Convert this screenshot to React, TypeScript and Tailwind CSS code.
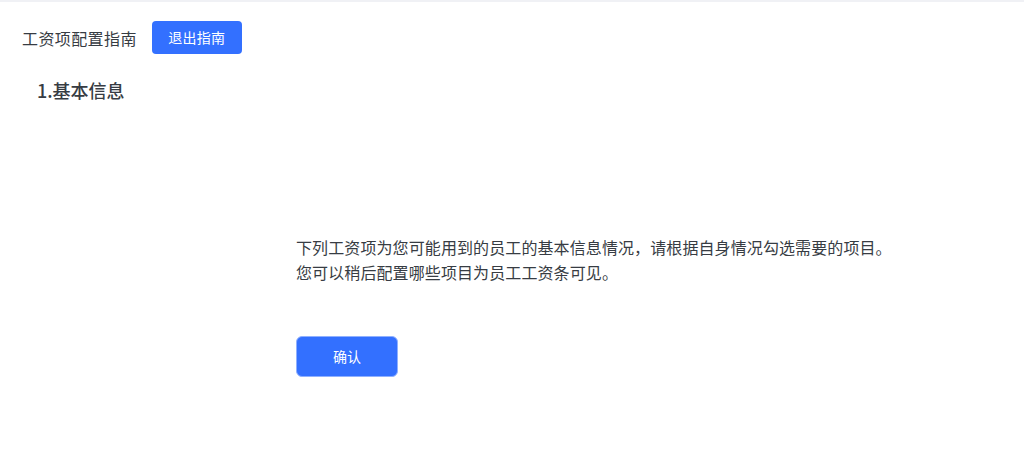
const font = { fontFamily: '"Noto Sans CJK SC", "Noto Sans", sans-serif' };

export default function App() {
  return (
    <div className="min-h-screen bg-white border-t-2 border-[#f0f1f5] text-[#1f2329]" style={font}>
      {/* 顶部：指南标题 + 退出 */}
      <div className="flex items-center pl-[22px] pt-[19px]">
        <span className="text-[16px] leading-[24px] tracking-[0.4px] text-[#373c43]">工资项配置指南</span>
        <button className="ml-[15px] h-[33px] w-[90px] rounded-[4px] bg-[#3370ff] text-[14px] tracking-[0.3px] text-white">
          退出指南
        </button>
      </div>

      <h2 className="mt-[23px] pl-[37px] text-[18px] leading-[26px] font-medium text-[#373c43]">1.基本信息</h2>

      <div className="mt-[132px] pl-[296px]">
        <p className="text-[16px] leading-[25px] tracking-[0.1px] text-[#373c43]">
          下列工资项为您可能用到的员工的基本信息情况，请根据自身情况勾选需要的项目。
          <br />
          您可以稍后配置哪些项目为员工工资条可见。
        </p>
        <button className="mt-[51px] h-[41px] w-[102px] rounded-[6px] border border-[#8fb0ff] bg-[#3370ff] text-[14px] text-white">
          确认
        </button>
      </div>
    </div>
  );
}
